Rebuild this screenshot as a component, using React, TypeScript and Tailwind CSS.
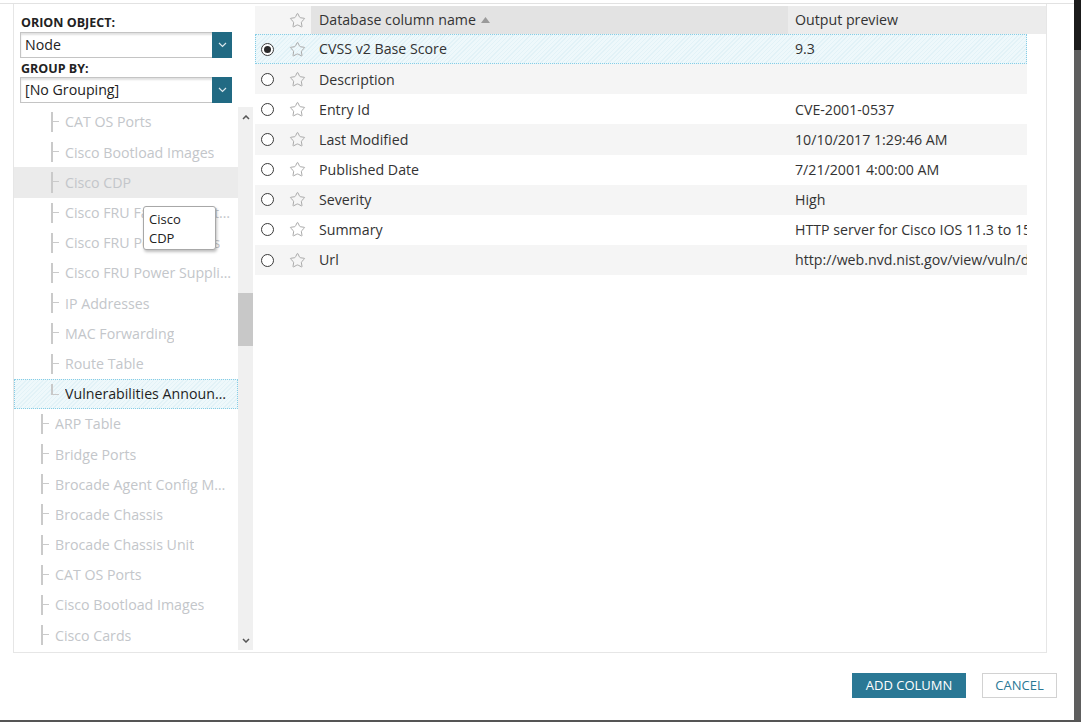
import { Star } from "lucide-react";

type TreeItem = { label: string; level: 1 | 2; state?: "hover" | "selected" };

const treeItems: TreeItem[] = [
  { label: "CAT OS Ports", level: 2 },
  { label: "Cisco Bootload Images", level: 2 },
  { label: "Cisco CDP", level: 2, state: "hover" },
  { label: "Cisco FRU Fan Tray Status", level: 2 },
  { label: "Cisco FRU Power Status", level: 2 },
  { label: "Cisco FRU Power Supplies", level: 2 },
  { label: "IP Addresses", level: 2 },
  { label: "MAC Forwarding", level: 2 },
  { label: "Route Table", level: 2 },
  { label: "Vulnerabilities Announcements", level: 2, state: "selected" },
  { label: "ARP Table", level: 1 },
  { label: "Bridge Ports", level: 1 },
  { label: "Brocade Agent Config Manager", level: 1 },
  { label: "Brocade Chassis", level: 1 },
  { label: "Brocade Chassis Unit", level: 1 },
  { label: "CAT OS Ports", level: 1 },
  { label: "Cisco Bootload Images", level: 1 },
  { label: "Cisco Cards", level: 1 },
];

const columns = [
  { name: "CVSS v2 Base Score", preview: "9.3" },
  { name: "Description", preview: "" },
  { name: "Entry Id", preview: "CVE-2001-0537" },
  { name: "Last Modified", preview: "10/10/2017 1:29:46 AM" },
  { name: "Published Date", preview: "7/21/2001 4:00:00 AM" },
  { name: "Severity", preview: "High" },
  { name: "Summary", preview: "HTTP server for Cisco IOS 11.3 to 15.0 allows remote attackers" },
  { name: "Url", preview: "http://web.nvd.nist.gov/view/vuln/detail?vulnId=CVE-2001-0537" },
];

// light blue hatch + dotted frame used for the selected rows
const picked =
  "bg-[repeating-linear-gradient(135deg,#e2f2f7_0px,#e2f2f7_1px,#eef8fb_1px,#eef8fb_3px)] outline-1 outline-dotted outline-[#86cde6] -outline-offset-1";

function SelectBox({ value }: { value: string }) {
  return (
    <div className="ml-[6px] flex h-[26px] w-[212px] border border-[#c4c4c4] bg-white shadow-[inset_0_2px_2px_rgba(0,0,0,0.12)]">
      <div className="flex flex-1 items-center pl-[4px] text-[14.2px] text-[#222]">{value}</div>
      <div className="-my-px -mr-px flex w-[20px] items-center justify-center bg-[#216a83]">
        <svg width="9" height="6" viewBox="0 0 9 6">
          <polyline points="1,1 4.5,4.5 8,1" fill="none" stroke="#dbe7ec" strokeWidth="1.2" />
        </svg>
      </div>
    </div>
  );
}

function Connector({ last }: { last?: boolean }) {
  return (
    <div className="relative h-full w-[14px] shrink-0">
      {last ? (
        <>
          <div className="absolute left-0 top-[5px] h-[11px] w-[1.5px] bg-[#c9c9c9]" />
          <div className="absolute left-0 top-[15px] h-px w-[8px] bg-[#c9c9c9]" />
        </>
      ) : (
        <>
          <div className="absolute left-0 top-[5px] bottom-[5px] w-[2px] bg-[#cacaca]" />
          <div className="absolute left-0 top-[14px] h-px w-[8px] bg-[#cacaca]" />
        </>
      )}
    </div>
  );
}

function TreeRow({ item }: { item: TreeItem }) {
  const selected = item.state === "selected";
  const hover = item.state === "hover";
  return (
    <div
      className={
        "flex h-[30.2px] items-center pr-[7px] " +
        (item.level === 2 ? "pl-[37px] " : "pl-[27px] ") +
        (selected ? picked + " " : "") +
        (hover ? "bg-[#ebebeb]" : "")
      }
    >
      <Connector last={selected} />
      <span className={"truncate text-[14.2px] " + (selected ? "text-[#1f1f1f]" : "text-[#c3c6ca]")}>
        {item.label}
      </span>
    </div>
  );
}

function Radio({ checked }: { checked?: boolean }) {
  return (
    <div className="flex h-[13px] w-[13px] items-center justify-center rounded-full border-[1.5px] border-[#3a3a3a] bg-white">
      {checked && <div className="h-[7px] w-[7px] rounded-full bg-[#2a2a2a]" />}
    </div>
  );
}

function StarIcon() {
  return <Star size={17} strokeWidth={1.4} color="#a9a9a9" />;
}

export default function App() {
  return (
    <div
      className="flex h-[722px] w-[1081px] flex-col overflow-hidden bg-[#555]"
      style={{ fontFamily: '"Open Sans", "Noto Sans", sans-serif' }}
    >
      <div className="flex h-[720px]">
        <div className="flex h-full w-[1074px] flex-col bg-white">
          <div className="h-[3px]" />
          <div className="flex flex-1 flex-col border-t border-[#e2e2e2]">
            {/* main panel */}
            <div className="ml-[13px] flex h-[649px] w-[1034px] border-x border-b border-[#e6e6e6]">
              {/* left: object picker */}
              <div className="flex w-[241px] shrink-0 flex-col pt-[11px]">
                <div className="pl-[7px] text-[12.5px] font-bold leading-[16px] text-[#222]">ORION OBJECT:</div>
                <div className="mt-px">
                  <SelectBox value="Node" />
                </div>
                <div className="mt-[3px] pl-[7px] text-[12.5px] font-bold leading-[16px] text-[#222]">GROUP BY:</div>
                <SelectBox value="[No Grouping]" />
                <div className="relative mt-[4px] flex h-[543px]">
                  <div className="w-[224px] overflow-hidden">
                    {treeItems.map((it, i) => (
                      <TreeRow key={i} item={it} />
                    ))}
                  </div>
                  <div className="relative w-[15px] bg-[#f0f0f0]">
                    <svg className="absolute left-[4px] top-[8px]" width="8" height="5" viewBox="0 0 8 5">
                      <polyline points="1,4 4,1 7,4" fill="none" stroke="#555" strokeWidth="1.5" />
                    </svg>
                    <div className="absolute left-0 top-[186px] h-[53px] w-full bg-[#c8c8c8]" />
                    <svg className="absolute bottom-[7px] left-[4px]" width="8" height="5" viewBox="0 0 8 5">
                      <polyline points="1,1 4,4 7,1" fill="none" stroke="#555" strokeWidth="1.5" />
                    </svg>
                  </div>
                  {/* tooltip */}
                  <div className="absolute left-[129px] top-[99px] h-[44px] w-[73px] rounded-[3px] border border-[#a8a8a8] bg-white pl-[5px] pt-[3px] text-[13px] leading-[19px] text-[#222] shadow-[1px_2px_3px_rgba(0,0,0,0.25)]">
                    Cisco
                    <br />
                    CDP
                  </div>
                </div>
              </div>

              {/* right: column table */}
              <div className="flex flex-1 flex-col pt-[2px]">
                <div className="flex h-[28px] text-[14.2px] text-[#333]">
                  <div className="w-[28px] bg-[#f5f5f5]" />
                  <div className="flex w-[28px] items-center justify-center bg-[#f5f5f5]">
                    <StarIcon />
                  </div>
                  <div className="flex w-[477px] items-center bg-[#e3e3e3] pl-[8px]">
                    Database column name
                    <svg className="ml-[5px]" width="9" height="6" viewBox="0 0 9 6">
                      <polygon points="0,6 4.5,0 9,6" fill="#9a9a9a" />
                    </svg>
                  </div>
                  <div className="flex flex-1 items-center bg-[#ececec] pl-[7px]">Output preview</div>
                </div>
                {columns.map((c, i) => {
                  const selected = i === 0;
                  return (
                    <div
                      key={c.name}
                      className={
                        "flex h-[30.15px] w-[772px] text-[14.2px] text-[#333] " +
                        (selected ? picked : i % 2 === 1 ? "bg-[#f5f5f5]" : "bg-white")
                      }
                    >
                      <div className="flex w-[28px] items-center pl-[6px]">
                        <Radio checked={selected} />
                      </div>
                      <div className="flex w-[28px] items-center justify-center">
                        <StarIcon />
                      </div>
                      <div className="flex w-[477px] items-center pl-[8px]">{c.name}</div>
                      <div className="flex min-w-0 flex-1 items-center overflow-hidden whitespace-nowrap pl-[7px]">
                        {c.preview}
                      </div>
                    </div>
                  );
                })}
              </div>
            </div>

            {/* footer */}
            <div className="mt-[20px] flex justify-end gap-[16px] pr-[17px]">
              <button className="h-[25px] w-[114px] bg-[#2a7895] text-[13px] text-white">ADD COLUMN</button>
              <button className="h-[25px] w-[75px] border border-[#d2d2d2] bg-white text-[13px] text-[#2a7895]">
                CANCEL
              </button>
            </div>
          </div>
        </div>
        <div className="flex flex-1 flex-col">
          <div className="h-[50px] bg-[#1b1b1b]" />
          <div className="flex-1 bg-[#5e5e5e]" />
        </div>
      </div>
      <div className="h-[2px] bg-[#555]" />
    </div>
  );
}
